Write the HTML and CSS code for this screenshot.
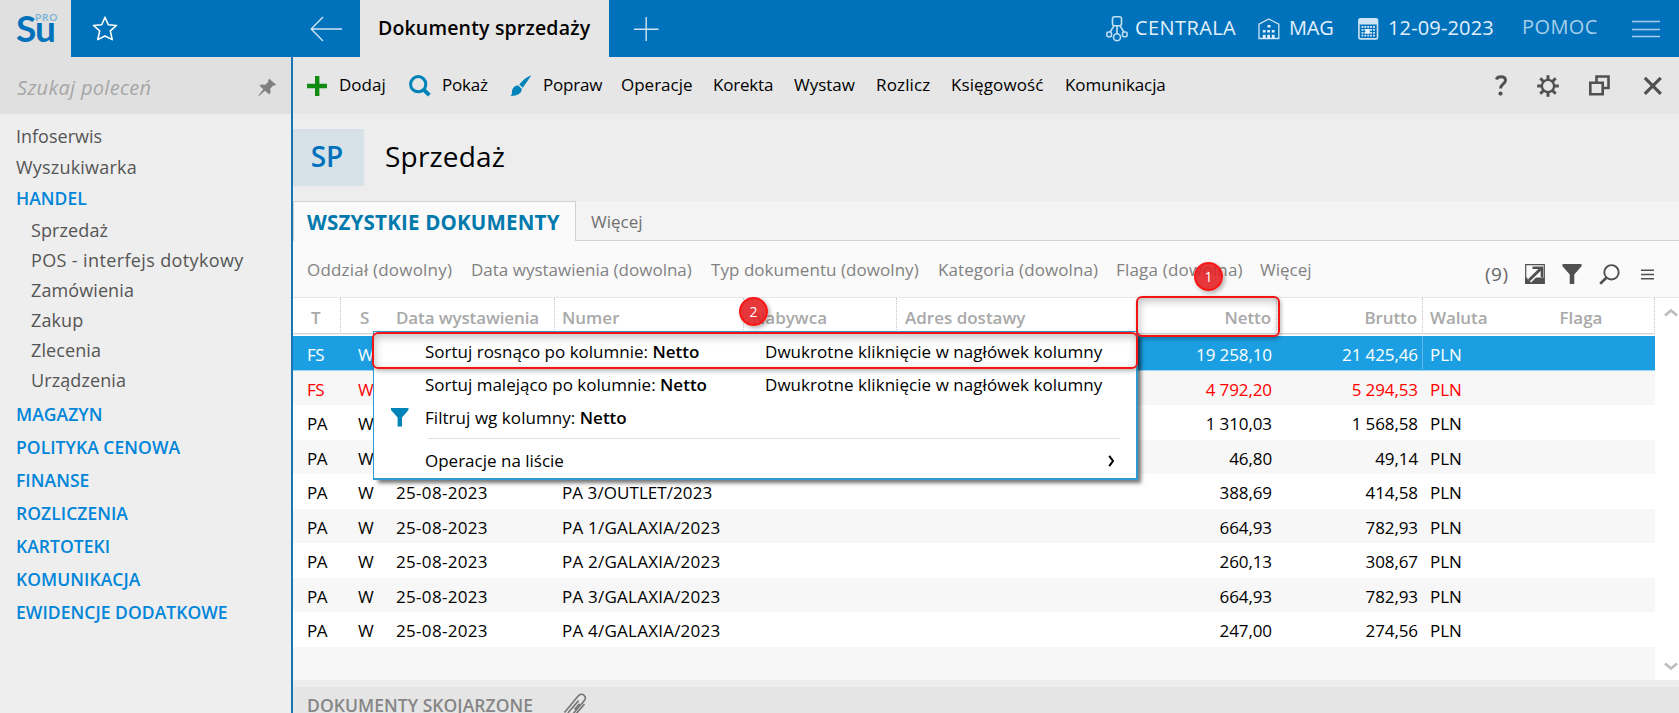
FILE: index.html
```html
<!DOCTYPE html>
<html lang="pl">
<head>
<meta charset="utf-8">
<title>Dokumenty sprzedaży</title>
<link rel="stylesheet" href="styles.css">
</head>
<body>
<div class="app">
  <header class="topbar">
    <div class="logo"><span class="logo-su">Su</span><span class="logo-pro">PRO</span></div>
    <svg class="ic-star" width="26" height="26" viewBox="0 0 26 26"><path d="M13 1.200l3.300 7.500 8.200.8-6.200 5.400 1.900 8.700-7.200-3.600-7.200 3.600 1.900-8.700L1.500 9.500l8.200-.8z" fill="none" stroke="#fff" stroke-width="1.600" stroke-linejoin="round"/></svg>
    <svg class="ic-back" width="32" height="26" viewBox="0 0 32 26"><path d="M13 1L1.200 13 13 25M1.200 13H32" fill="none" stroke="#cfe4f3" stroke-width="1.400"/></svg>
    <div class="doc-tab">Dokumenty sprzedaży</div>
    <svg class="ic-new" width="26" height="26" viewBox="0 0 26 26"><path d="M13.200 1v24M1 13.200h24.500" fill="none" stroke="#cfe4f3" stroke-width="1.400"/></svg>
    <div class="status">
      <svg class="st-branch" width="22" height="28" viewBox="0 0 22 28"><g fill="none" stroke="#c3dff2" stroke-width="1.600"><rect x="6.500" y="1.700" width="9" height="9" rx="2"/><path d="M8 10.700L4.200 17M14 10.700l3.800 6.300M11 10.700v8"/><rect x=".9" y="17" width="4.600" height="4.800" rx="1.500"/><rect x="16.500" y="17" width="4.600" height="4.800" rx="1.500"/><circle cx="11" cy="22.300" r="3.500"/></g></svg>
      <span class="st-text t-branch">CENTRALA</span>
      <svg class="st-store" width="22" height="22" viewBox="0 0 22 22"><path d="M1 20.500V6.200L10.800 1l10 5.200v14.300z" fill="none" stroke="#cfe4f3" stroke-width="1.300"/><path d="M9.500 7h3v2.500h-3zM4.800 12h2.800v2.600H4.800zM9.200 12H12v2.600H9.200zM13.800 12h2.800v2.600h-2.800zM4.800 16.700h2.800v3.800H4.800zM9.200 16.700H12v3.800H9.200zM13.800 16.700h2.800v3.800h-2.800z" fill="#e4f1fa"/></svg>
      <span class="st-text t-store">MAG</span>
      <svg class="st-date" width="21" height="22" viewBox="0 0 21 22"><rect x=".9" y=".9" width="18.600" height="20" rx="1.500" fill="none" stroke="#cfe4f3" stroke-width="1.600"/><path d="M1 1h18.500v5.500H1z" fill="#cfe4f3"/><path d="M3.500 9h13.500M3.500 11.900h13.500M3.500 14.800h13.500M3.500 17.700h13.500" stroke="#cfe4f3" stroke-width="1.800" stroke-dasharray="1.900 .97"/><path d="M7.300 11h4.600v4.600H7.300z" fill="#e9f4fb"/></svg>
      <span class="st-text t-date">12-09-2023</span>
      <span class="st-help">POMOC</span>
      <svg class="st-menu" width="28" height="18" viewBox="0 0 28 18"><path d="M0 1.500h28M0 9.500h28M0 16.500h28" stroke="#a5cfeb" stroke-width="1.300"/></svg>
    </div>
  </header>

  <div class="body">
    <aside class="sidebar">
      <div class="search"><span>Szukaj poleceń</span>
        <svg width="19" height="19" viewBox="0 0 19 19"><path d="M11.300.8l6.600 5.800-1.300 1.200-1.400-.3-3 3.300.4 4-1.600 1.500-4-3.600L1 18l-.6-.5 4.900-6.300-3.700-3.400L3 6.400l4.300.3 3.200-3.200-.4-1.400z" fill="#808080"/></svg>
      </div>
      <ul class="menu-tree">
        <li class="top">Infoserwis</li>
        <li class="top wide">Wyszukiwarka</li>
        <li class="group first">HANDEL</li>
        <li class="sub">Sprzedaż</li>
        <li class="sub pos">POS - interfejs dotykowy</li>
        <li class="sub">Zamówienia</li>
        <li class="sub">Zakup</li>
        <li class="sub">Zlecenia</li>
        <li class="sub last">Urządzenia</li>
        <li class="group">MAGAZYN</li>
        <li class="group">POLITYKA CENOWA</li>
        <li class="group">FINANSE</li>
        <li class="group">ROZLICZENIA</li>
        <li class="group">KARTOTEKI</li>
        <li class="group">KOMUNIKACJA</li>
        <li class="group">EWIDENCJE DODATKOWE</li>
      </ul>
    </aside>

    <main class="content">
      <div class="toolbar">
        <svg class="tb-add" width="20" height="20" viewBox="0 0 20 20"><path d="M8 0h4.400v7.800H20v4.400h-7.600V20H8v-7.800H0V7.800h8z" fill="#118a11"/></svg>
        <span class="b-add">Dodaj</span>
        <svg class="tb-show" width="22" height="22" viewBox="0 0 22 22"><circle cx="9.200" cy="9.200" r="7.600" fill="none" stroke="#0083b8" stroke-width="3"/><path d="M14.500 14.500l5.800 5.600" stroke="#0083b8" stroke-width="4"/></svg>
        <span class="b-show">Pokaż</span>
        <svg class="tb-edit" width="22" height="22" viewBox="0 0 22 22"><path d="M21.400.2L12.800 12.700 9.300 9.400C12.500 5.200 17 1.600 21.400.2zM8.300 10.600l3.400 3.200c.5 4.600-5 7.400-11.200 7.200 1.600-1.100 1.300-2.400 1.500-4.400.3-3.400 2.800-6.200 6.300-6z" fill="#0083b8"/></svg>
        <span class="b-edit">Popraw</span>
        <span class="b-oper">Operacje</span>
        <span class="b-kor">Korekta</span>
        <span class="b-wys">Wystaw</span>
        <span class="b-roz">Rozlicz</span>
        <span class="b-ksi">Księgowość</span>
        <span class="b-kom">Komunikacja</span>
        <div class="win-icons">
          <svg width="12" height="21" viewBox="0 0 12 21"><path d="M1.300 4.400C2 2.400 3.900 1.700 6 1.700c2.600 0 4.500 1.300 4.500 3.600 0 3.700-4.900 3.700-4.900 8.300" fill="none" stroke="#505050" stroke-width="2.900"/><circle cx="5.500" cy="18.600" r="2.100" fill="#505050"/></svg>
          <svg width="22" height="22" viewBox="0 0 22 22"><circle cx="11" cy="11" r="6.100" fill="none" stroke="#505050" stroke-width="2.300"/><path d="M11 5V.2M11 17v4.800M5 11H.2M17 11h4.800M6.500 6.500L3.300 3.300M15.500 6.500l3.200-3.200M6.500 15.500l-3.200 3.200M15.500 15.500l3.200 3.200" stroke="#505050" stroke-width="3"/></svg>
          <svg width="21" height="21" viewBox="0 0 21 21"><path d="M7.500 7V1.500h12v11.500h-5M1.300 7.700h12.400v11.500H1.300z" fill="none" stroke="#505050" stroke-width="2.600"/></svg>
          <svg width="20" height="20" viewBox="0 0 20 20"><path d="M1.800 1.800l16 16M17.800 1.800l-16 16" stroke="#505050" stroke-width="3.200"/></svg>
        </div>
      </div>

      <div class="title-row"><div class="title-badge">SP</div><h1>Sprzedaż</h1></div>

      <div class="tabs"><div class="tab-active">WSZYSTKIE DOKUMENTY</div><div class="tab-more">Więcej</div></div>

      <div class="filters">
        <span class="f-odd">Oddział (dowolny)</span>
        <span class="f-dat">Data wystawienia (dowolna)</span>
        <span class="f-typ">Typ dokumentu (dowolny)</span>
        <span class="f-kat">Kategoria (dowolna)</span>
        <span class="f-fla">Flaga (dowolna)</span>
        <span class="f-wie">Więcej</span>
        <div class="list-tools">
          <span class="count">(9)</span>
          <svg width="20" height="20" viewBox="0 0 20 20"><path d="M.7.7h18.600v18.600H.7z" fill="#fafafa" stroke="#505050" stroke-width="1.200"/><path d="M19.500 13.500V20H0v-6.500z" fill="#505050"/><path d="M4 16.300L14.500 5.500" stroke="#fafafa" stroke-width="6"/><path d="M4 16.300L15.500 5" stroke="#505050" stroke-width="3"/><path d="M7.500 3.700h9.500v9.500" fill="none" stroke="#505050" stroke-width="2.600"/></svg>
          <svg class="lt-funnel" width="20" height="20" viewBox="0 0 20 20"><path d="M.5 0h19v2.200L12.300 10.500V20H7.700v-9.500L.5 2.200z" fill="#505050"/></svg>
          <svg class="lt-search" width="21" height="21" viewBox="0 0 21 21"><circle cx="12.500" cy="8.300" r="7.200" fill="none" stroke="#505050" stroke-width="1.900"/><path d="M7.600 13.500L1.200 19.700" stroke="#505050" stroke-width="2.600"/></svg>
          <svg class="lt-menu" width="13" height="11" viewBox="0 0 13 11"><path d="M0 1.200h13M0 5.500h13M0 9.800h13" stroke="#505050" stroke-width="1.400"/></svg>
        </div>
      </div>

      <div class="list">
        <div class="grid">
          <div class="row head"><span class="t">T</span><span class="s">S</span><span class="d">Data wystawienia</span><span class="n">Numer</span><span class="c">Nabywca</span><span class="a">Adres dostawy</span><span class="num net">Netto</span><span class="num bru">Brutto</span><span class="w">Waluta</span><span class="fl">Flaga</span></div>
          <div class="row selected"><span class="t">FS</span><span class="s">W</span><span></span><span></span><span></span><span></span><span class="num">19 258,10</span><span class="num bru">21 425,46</span><span class="w">PLN</span><span></span></div>
          <div class="row alert"><span class="t">FS</span><span class="s">W</span><span></span><span></span><span></span><span></span><span class="num">4 792,20</span><span class="num bru">5 294,53</span><span class="w">PLN</span><span></span></div>
          <div class="row"><span class="t">PA</span><span class="s">W</span><span></span><span></span><span></span><span></span><span class="num">1 310,03</span><span class="num bru">1 568,58</span><span class="w">PLN</span><span></span></div>
          <div class="row"><span class="t">PA</span><span class="s">W</span><span></span><span></span><span></span><span></span><span class="num">46,80</span><span class="num bru">49,14</span><span class="w">PLN</span><span></span></div>
          <div class="row"><span class="t">PA</span><span class="s">W</span><span class="d">25-08-2023</span><span class="n out">PA 3/OUTLET/2023</span><span></span><span></span><span class="num">388,69</span><span class="num bru">414,58</span><span class="w">PLN</span><span></span></div>
          <div class="row"><span class="t">PA</span><span class="s">W</span><span class="d">25-08-2023</span><span class="n">PA 1/GALAXIA/2023</span><span></span><span></span><span class="num">664,93</span><span class="num bru">782,93</span><span class="w">PLN</span><span></span></div>
          <div class="row"><span class="t">PA</span><span class="s">W</span><span class="d">25-08-2023</span><span class="n">PA 2/GALAXIA/2023</span><span></span><span></span><span class="num">260,13</span><span class="num bru">308,67</span><span class="w">PLN</span><span></span></div>
          <div class="row"><span class="t">PA</span><span class="s">W</span><span class="d">25-08-2023</span><span class="n">PA 3/GALAXIA/2023</span><span></span><span></span><span class="num">664,93</span><span class="num bru">782,93</span><span class="w">PLN</span><span></span></div>
          <div class="row"><span class="t">PA</span><span class="s">W</span><span class="d">25-08-2023</span><span class="n">PA 4/GALAXIA/2023</span><span></span><span></span><span class="num">247,00</span><span class="num bru">274,56</span><span class="w">PLN</span><span></span></div>
          <div class="row blank"></div>
        </div>
        <div class="scroll">
          <svg width="14" height="9" viewBox="0 0 14 9"><path d="M1 7.500l6-5 6 5" fill="none" stroke="#bdbdbd" stroke-width="2.600"/></svg>
          <svg width="14" height="9" viewBox="0 0 14 9"><path d="M1 1.500l6 5 6-5" fill="none" stroke="#bdbdbd" stroke-width="2.600"/></svg>
        </div>
      </div>

      <div class="related"><span>DOKUMENTY SKOJARZONE</span>
        <svg width="24" height="26" viewBox="0 0 24 26"><path d="M1.500 19.500L14.700 3.600c2.200-2.600 4.500-3 6.400-1.300 1.900 1.700 1.600 3.800-.3 6L9.600 21.400c-1.300 1.400-2.700 1.500-3.700.5s-.9-2.200.2-3.500L15.600 7.600M5 24.500l2.500.3c2-.2 3-1 4.500-2.700L21.500 11M11.500 16.500l5-5.800" fill="none" stroke="#757575" stroke-width="1.600"/></svg>
      </div>
    </main>
  </div>

  <div class="popup">
    <div class="item"><span class="label l-asc">Sortuj rosnąco po kolumnie: <b>Netto</b></span><span class="hint">Dwukrotne kliknięcie w nagłówek kolumny</span></div>
    <div class="item"><span class="label l-desc">Sortuj malejąco po kolumnie: <b>Netto</b></span><span class="hint">Dwukrotne kliknięcie w nagłówek kolumny</span></div>
    <div class="item"><svg class="pf" width="18" height="19" viewBox="0 0 18 19"><path d="M0 0h17.500v2L11 9.500V18.600H6.600V9.500L0 2z" fill="#0083b8"/></svg><span class="label l-fil">Filtruj wg kolumny: <b>Netto</b></span></div>
    <div class="sep"></div>
    <div class="item"><span class="label">Operacje na liście</span><svg class="pa" width="7" height="12" viewBox="0 0 7 12"><path d="M1.200.8L5 6 1.200 11.200" fill="none" stroke="#000" stroke-width="2"/></svg></div>
  </div>

  <div class="mark mark-col"></div>
  <div class="mark mark-item"></div>
  <div class="pin pin-1">1</div>
  <div class="pin pin-2">2</div>
</div>
</body>
</html>
```
FILE: styles.css
```css
* { box-sizing: border-box; }
body { margin: 0; font-family: "Open Sans", "Noto Sans", sans-serif; font-size: 17px; color: #000; }
.app { position: relative; width: 1679px; height: 713px; overflow: hidden; display: flex; flex-direction: column; white-space: nowrap; }
svg { display: block; flex: none; }

/* top bar */
.topbar { height: 57px; flex: none; display: flex; align-items: center; background: #0072bc; }
.logo { position: relative; width: 71px; height: 57px; background: #e0e0e0; font-family: Lato, sans-serif; }
.logo-su { position: absolute; left: 16px; top: 5px; font-size: 37px; line-height: 45px; font-weight: 700; letter-spacing: -1px; color: #0072bc; }
.logo-pro { position: absolute; left: 35px; top: 11px; font-size: 10px; line-height: 12px; font-weight: 700; letter-spacing: .9px; color: #79b2da; }
.ic-star { margin-left: 21px; }
.ic-back { margin-left: 192px; }
.doc-tab { margin-left: 18px; width: 249px; height: 57px; padding: 0 0 0 18px; line-height: 55px; background: #e6e6e6; font-size: 19.500px; font-weight: 600; letter-spacing: .17px; }
.ic-new { margin-left: 24px; }
.status { margin-left: auto; display: flex; align-items: center; padding-right: 19px; color: #e2f0fa; font-size: 20px; }
.st-text { line-height: 54px; padding-bottom: 2px; }
.t-branch { margin-left: 7px; width: 123px; letter-spacing: .4px; }
.t-store { margin-left: 9px; width: 69px; letter-spacing: -.2px; }
.t-date { margin-left: 9px; width: 134px; letter-spacing: .15px; }
.st-help { width: 110px; padding-bottom: 5px; color: #a5cfeb; letter-spacing: .4px; }

.body { display: flex; flex: 1; min-height: 0; }

/* sidebar */
.sidebar { width: 293px; flex: none; background: #eee; border-right: 2px solid #1b75b5; }
.search { height: 57px; background: #e0e0e0; display: flex; align-items: center; justify-content: space-between; padding: 3px 14px 0 17px; font-size: 20px; font-style: italic; color: #a6a6a6; letter-spacing: .3px; }
.menu-tree { list-style: none; margin: 0; padding: 7px 0 0 16px; color: #555; font-size: 18px; }
.top { line-height: 31px; }
.wide { letter-spacing: .2px; }
.group { line-height: 33px; font-size: 17.500px; font-weight: 600; color: #0085d9; letter-spacing: .05px; }
.group.first { line-height: 31px; margin-bottom: 1px; }
.sub { line-height: 30px; padding-left: 15px; letter-spacing: .1px; }
.sub.pos { letter-spacing: .37px; }
.sub.last { margin-bottom: 3px; }

/* content */
.content { flex: 1; min-width: 0; display: flex; flex-direction: column; background: #fafafa; }
.toolbar { height: 57px; flex: none; display: flex; align-items: center; padding-left: 14px; background: #e6e6e6; }
.toolbar > span { padding-bottom: 2px; }
.b-add { margin-left: 12px; width: 70px; }
.b-show { margin-left: 11px; width: 68px; letter-spacing: -.2px; }
.b-edit { margin-left: 11px; width: 78px; letter-spacing: -.2px; }
.b-oper { width: 92px; }
.b-kor { width: 81px; letter-spacing: -.2px; }
.b-wys { width: 82px; }
.b-roz { width: 75px; letter-spacing: .15px; }
.b-ksi { width: 114px; letter-spacing: .1px; }
.b-kom { letter-spacing: -.1px; }
.win-icons { margin-left: auto; display: flex; align-items: center; gap: 30px; padding-right: 16px; }
.win-icons svg:nth-child(3) { margin-right: 3px; }

.title-row { height: 87px; flex: none; display: flex; align-items: center; background: #ededed; }
.title-badge { width: 71px; height: 57px; line-height: 54px; text-align: center; background: #d7e1e8; color: #0072bc; font-size: 28px; font-weight: 600; padding-right: 3px; }
.title-row h1 { margin: 0 0 0 21px; font-size: 28px; font-weight: 400; padding-bottom: 3px; letter-spacing: .2px; }

.tabs { height: 40px; flex: none; display: flex; align-items: flex-end; background: #f3f3f3; border-bottom: 1px solid #d2d2d2; }
.tab-active { width: 283px; height: 40px; margin-bottom: -1px; padding-left: 13px; line-height: 40px; background: #fafafa; border: 1px solid #d2d2d2; border-bottom: 0; color: #0079ac; font-size: 20.500px; font-weight: 700; letter-spacing: .2px; }
.tab-more { padding-left: 15px; line-height: 36px; color: #707070; }

.filters { height: 57px; flex: none; display: flex; align-items: center; padding-left: 14px; border-bottom: 1px solid #e6e6e6; color: #828282; }
.filters > span { padding-top: 1px; }
.f-odd { width: 164px; letter-spacing: .2px; }
.f-dat { width: 240px; }
.f-typ { width: 227px; letter-spacing: .05px; }
.f-kat { width: 178px; letter-spacing: .1px; }
.f-fla { width: 144px; letter-spacing: .2px; }
.list-tools { margin-left: auto; padding: 10px 25px 0 0; display: flex; align-items: center; color: #666; }
.count { width: 40px; font-size: 19px; letter-spacing: .5px; }
.lt-funnel { margin-left: 17px; }
.lt-search { margin-left: 17px; }
.lt-menu { margin-left: 21px; }

/* document list */
.list { height: 382px; flex: none; display: flex; background: #fff; }
.grid { width: 1362px; display: flex; flex-direction: column; }
.row { height: 34.500px; flex: none; display: grid; grid-template-columns: 48px 49px 165px 189px 153px 231px 149px 146px 85px 147px; line-height: 34px; padding-top: 2px; }
.row:nth-child(odd) { background: #f7f7f7; }
.row .t { padding-left: 14px; letter-spacing: -.4px; }
.row .s { padding-left: 17px; }
.row .d { padding-left: 6px; letter-spacing: .32px; }
.row .n { padding-left: 7px; letter-spacing: .23px; }
.row .n.out { letter-spacing: .07px; }
.row .c, .row .a { padding-left: 8px; }
.row .num { text-align: right; padding-right: 5px; letter-spacing: -.1px; }
.row .bru { padding-right: 5px; }
.row .w { padding-left: 7px; letter-spacing: -.1px; }
.row.head { height: 38px; padding: 0; line-height: 40px; color: #a9a9a9; font-weight: 600; background: linear-gradient(#fff 0 35px, #d6d6d6 35px 36px, #efefef 36px 37px, #fff 37px); }
.row.head span { height: 34px; border-right: 1px dotted #c6c6c6; }
.row.head .s, .row.head .a { border-right: 0; }
.row.head .t { padding-left: 18px; }
.row.head .s { padding-left: 19px; }
.row.head .d { padding-left: 6px; letter-spacing: -.12px; }
.row.head .n { letter-spacing: 0; }
.row.head .w { border-right: 0; }
.row.head .fl { text-align: center; }
.row.selected { background: #1b9fe2; color: #fff; border-bottom: 1px solid #9ed5f3; }
.row.selected .bru { border-right: 1px solid #5cbaea; padding-right: 4px; }
.row.selected span { margin-top: -2px; padding-top: 2px; }
.row.alert { color: #f00; }
.row.blank { flex: 1; height: auto; }
.scroll { flex: 1; display: flex; flex-direction: column; align-items: center; justify-content: space-between; padding: 10px 0 9px 8px; }

.related { flex: 1; border-top: 7px solid #ededed; background: #e5e5e5; display: flex; align-items: flex-start; padding-left: 14px; color: #868686; font-size: 17.500px; font-weight: 600; line-height: 37px; overflow: hidden; }
.related span { width: 256px; letter-spacing: .05px; }
.related svg { margin-top: 6px; }

/* column context menu */
.popup { position: absolute; left: 373px; top: 331px; width: 765px; height: 149px; padding-top: 3px; background: #fff; border: 1px solid #2a9bd3; border-right-width: 2px; border-bottom-width: 2px; box-shadow: 4px 4px 4px -1px rgba(0,0,0,.55); }
.item { height: 33px; line-height: 33px; padding-left: 51px; display: flex; align-items: center; }
.item b { font-weight: 600; letter-spacing: 0; }
.label { width: 340px; }
.l-asc { letter-spacing: 0; }
.l-fil { letter-spacing: .05px; }
.hint { letter-spacing: .05px; }
.pf { margin: 0 16px 0 -34px; }
.pa { margin-left: 343px; }
.sep { height: 1px; margin: 4px 16px 5px 54px; background: #dedede; }

/* annotations */
.mark { position: absolute; border: 2px solid #f31414; border-radius: 6px; box-shadow: 1px 2px 4px rgba(0,0,0,.3), inset 1px 3px 8px rgba(0,0,0,.25); }
.mark-col { left: 1136px; top: 296px; width: 144px; height: 41px; }
.mark-item { left: 372px; top: 332px; width: 766px; height: 37px; }
.pin { position: absolute; width: 29px; height: 29px; border-radius: 50%; border: 2px solid #fb1616; background: rgba(226,28,32,.88); color: #fff; font-size: 14px; line-height: 25px; text-align: center; box-shadow: 2px 2px 4px rgba(0,0,0,.3); }
.pin-1 { left: 1194px; top: 262px; }
.pin-2 { left: 739px; top: 297px; }
```
